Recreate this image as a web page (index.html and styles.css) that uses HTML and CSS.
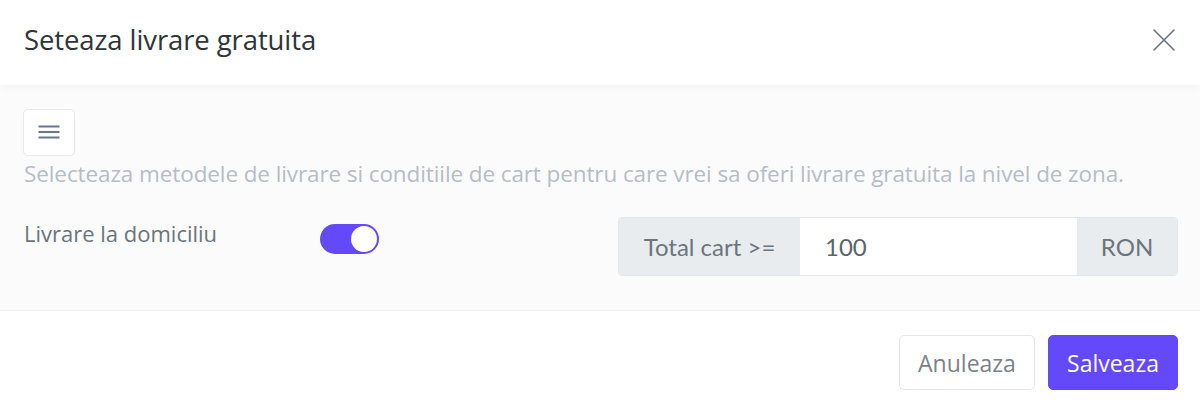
FILE: index.html
```html
<!DOCTYPE html>
<html>
<head>
<meta charset="utf-8">
<link rel="stylesheet" href="styles.css">
</head>
<body>
<div class="modal">
  <header class="modal-header">
    <h1 class="modal-title">Seteaza livrare gratuita</h1>
    <button class="close" aria-label="close">
      <svg width="24" height="24" viewBox="0 0 24 24"><path d="M2 2 L22 22 M22 2 L2 22" stroke="#6c757d" stroke-width="1.6" fill="none" stroke-linecap="round"/></svg>
    </button>
  </header>
  <main class="modal-body">
    <button class="menu-btn" aria-label="menu">
      <svg width="22" height="16" viewBox="0 0 22 16"><path d="M0.5 2.5 H21.5 M0.5 8 H21.5 M0.5 13.5 H21.5" stroke="#6b7591" stroke-width="2" fill="none"/></svg>
    </button>
    <p class="desc">Selecteaza metodele de livrare si conditiile de cart pentru care vrei sa oferi livrare gratuita la nivel de zona.</p>
    <div class="row">
      <div class="row-label">Livrare la domiciliu</div>
      <div class="toggle-cell"><span class="toggle"><span class="knob"></span></span></div>
      <div class="input-group">
        <span class="addon addon-left">Total cart &gt;=</span>
        <span class="field">100</span>
        <span class="addon addon-right">RON</span>
      </div>
    </div>
  </main>
  <footer class="modal-footer">
    <button class="btn btn-light">Anuleaza</button>
    <button class="btn btn-primary">Salveaza</button>
  </footer>
</div>
</body>
</html>
```
FILE: styles.css
```css
* { box-sizing: border-box; }
html, body { margin: 0; padding: 0; background: #fff; }
body { font-family: "Open Sans", "Noto Sans", sans-serif; width: 1200px; height: 405px; overflow: hidden; }
.modal { display: flex; flex-direction: column; height: 405px; }
.modal-header {
  height: 85px; flex: none; display: flex; align-items: center; justify-content: space-between;
  padding: 0 24px 5px 24px; background: #fff; position: relative; z-index: 1;
  box-shadow: 0 2px 10px rgba(0,0,0,0.035);
}
.modal-title { margin: 0; font-size: 27.5px; line-height: 34px; font-weight: 400; color: #2f3439; letter-spacing: -0.1px; }
.close { border: 0; background: none; padding: 0; display: flex; }
.modal-body { background: #fbfbfb; padding: 24px 22px 0 23px; height: 225px; flex: none; }
.menu-btn {
  width: 52px; height: 47px; border: 1px solid #e6e8ec; border-radius: 5px; background: #fff;
  display: flex; align-items: center; justify-content: center; padding: 0 0 1px 0;
}
.desc { margin: 4px 0 0 1px; font-size: 22.5px; color: #b6bdc7; line-height: 28px; letter-spacing: -0.1px; white-space: nowrap; }
.row { display: flex; align-items: flex-start; margin-top: 29px; }
.row-label { width: 297px; padding: 2px 0 0 1px; font-size: 22px; line-height: 28px; color: #6c757d; }
.toggle-cell { padding-top: 7px; flex: 1; }
.toggle {
  display: block; width: 59px; height: 30px; border-radius: 15px; background: #6449fb; position: relative;
}
.knob {
  position: absolute; right: 2px; top: 2px; width: 26px; height: 26px; border-radius: 50%; background: #fff;
}
.input-group {
  display: flex; width: 560px; height: 59px; border: 1px solid #e3e6ea; border-radius: 4px; overflow: hidden;
  font-family: "Lato", sans-serif; font-size: 24px; color: #6c757d;
}
.addon { background: #e9ecef; display: flex; align-items: center; justify-content: center; }
.addon-left { width: 181px; }
.addon-right { width: 100px; }
.field { flex: 1; background: #fff; display: flex; align-items: center; padding-left: 25px; color: #5b636b; }
.modal-footer {
  flex: 1; display: flex; justify-content: flex-end; align-items: flex-start; gap: 13px;
  padding: 24px 22px 0 0; background: #fff; border-top: 1px solid #f1f1f1;
}
.btn { height: 55px; border-radius: 5px; font-family: "Open Sans", sans-serif; font-size: 23px; padding: 0; }
.btn-light { width: 136px; background: #fff; border: 1px solid #e3e6ea; color: #7b8289; }
.btn-primary { width: 130px; background: #6449fb; border: 1px solid #6449fb; color: #fff; }
```
